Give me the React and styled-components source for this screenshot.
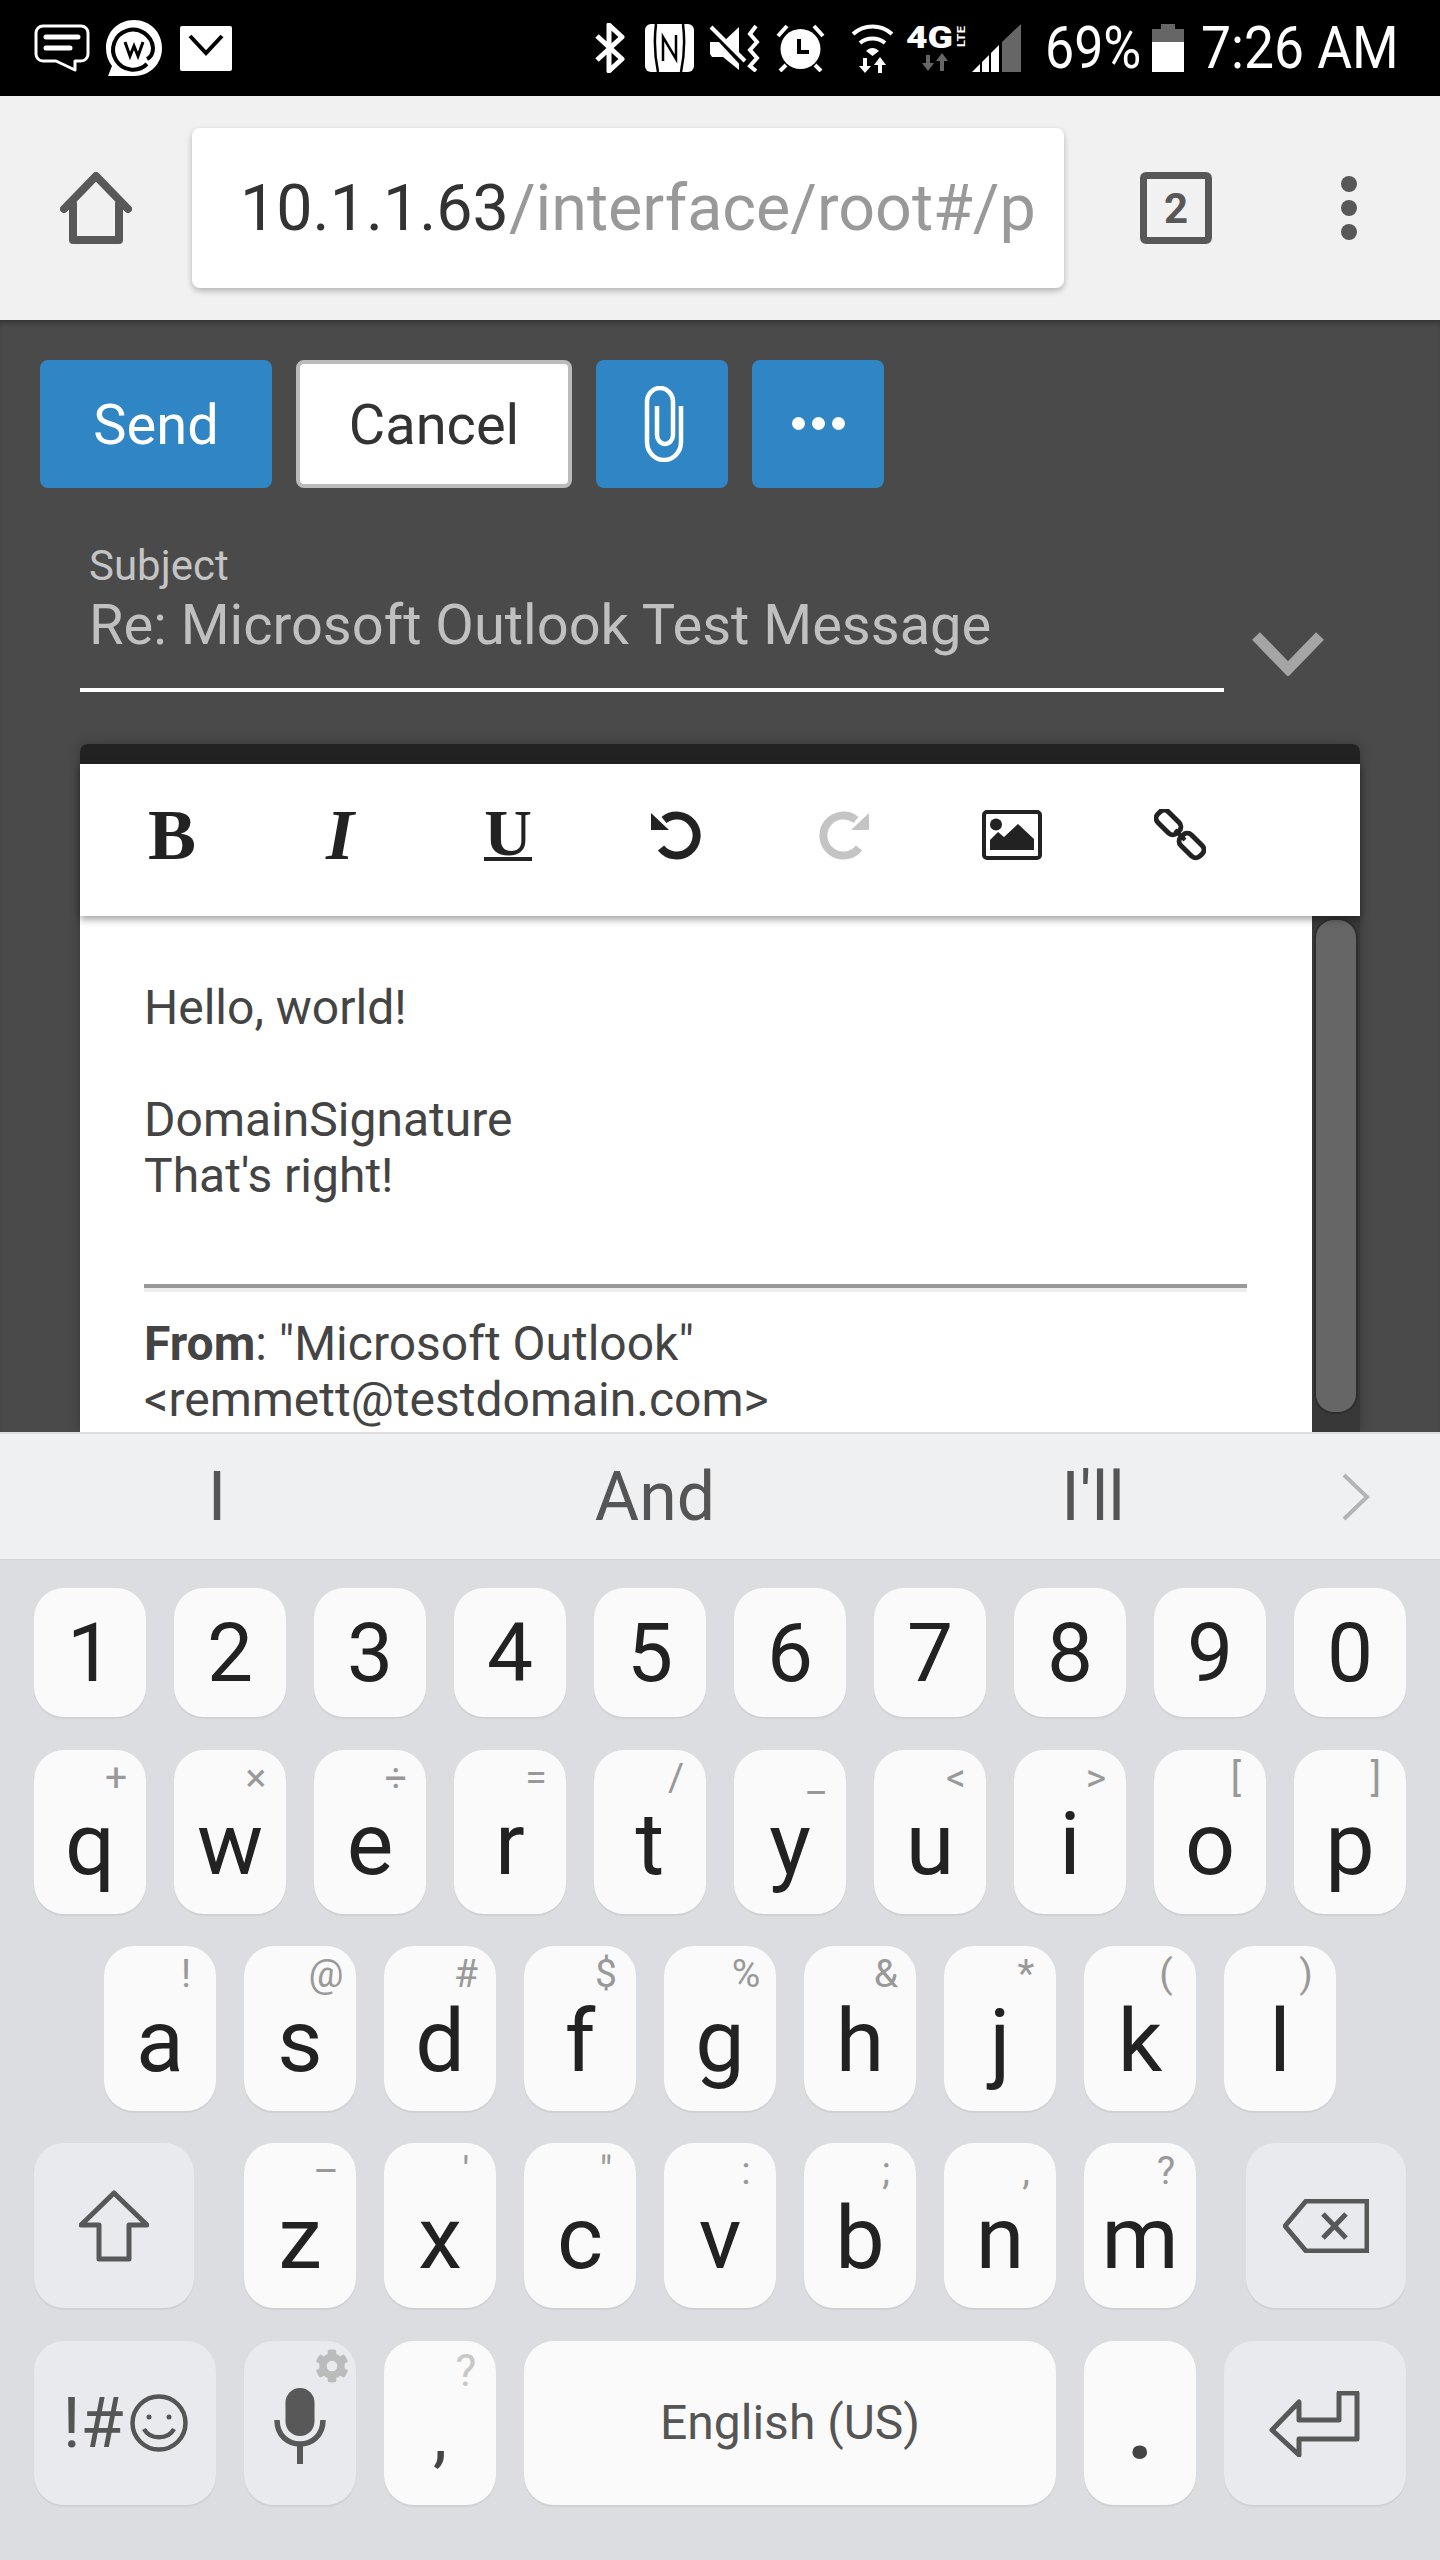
import React from 'react';
import styled, { createGlobalStyle } from 'styled-components';
import { FaCog } from 'react-icons/fa';

const GlobalStyle = createGlobalStyle`
  html, body {
    margin: 0;
    padding: 0;
    background: #000;
  }
  * {
    box-sizing: border-box;
  }
`;

const Screen = styled.div`
  width: 1440px;
  height: 2560px;
  overflow: hidden;
  display: flex;
  flex-direction: column;
  font-family: Roboto, "Liberation Sans", sans-serif;
`;

/* status bar */
const StatusBar = styled.div`
  height: 96px;
  flex: none;
  background: #000;
  display: flex;
  align-items: center;
  padding: 0 45px 0 34px;
`;

const StatusIcon = styled.svg`
  display: block;
  flex: none;
  margin-left: ${p => p.$gap || 0}px;
`;

const StatusSpacer = styled.div`
  flex: 1;
`;

const StatusText = styled.span`
  display: block;
  flex: none;
  width: ${p => p.$w}px;
  margin-left: ${p => p.$gap}px;
  color: #fff;
  font-size: 59px;
  line-height: 64px;
  white-space: nowrap;
  transform: scaleX(${p => p.$sx});
  transform-origin: left center;
`;

/* browser toolbar */
const BrowserBar = styled.div`
  height: 224px;
  flex: none;
  background: #f1f1f1;
  display: flex;
  align-items: center;
  padding-left: 60px;
`;

const UrlBox = styled.div`
  width: 872px;
  height: 160px;
  margin-left: 60px;
  padding: 0 30px 0 48px;
  background: #fff;
  border-radius: 8px;
  box-shadow: 0 3px 6px rgba(0, 0, 0, 0.25);
  display: flex;
  align-items: center;
  overflow: hidden;
  white-space: nowrap;
  font-size: 64.6px;
  color: #999;
`;

const UrlHost = styled.span`
  color: #333;
`;

const TabCount = styled.div`
  width: 72px;
  height: 72px;
  margin-left: 76px;
  border: 7px solid #585858;
  border-radius: 6px;
  display: flex;
  align-items: center;
  justify-content: center;
  color: #585858;
  font-size: 42px;
  font-weight: 700;
`;

const MenuDots = styled.div`
  margin-left: 129px;
  display: flex;
  flex-direction: column;
  gap: 8px;
`;

const MenuDot = styled.span`
  width: 16px;
  height: 16px;
  border-radius: 50%;
  background: #585858;
`;

/* compose page */
const Page = styled.div`
  height: 1112px;
  flex: none;
  background: #4a4a4a;
  box-shadow: inset 0 6px 6px -4px rgba(0, 0, 0, 0.35);
  overflow: hidden;
  padding-top: 40px;
`;

const ButtonRow = styled.div`
  display: flex;
  gap: 24px;
  padding-left: 40px;
`;

const ActionButton = styled.div`
  width: ${p => p.$w}px;
  height: 128px;
  border-radius: 8px;
  padding-top: 2px;
  display: flex;
  align-items: center;
  justify-content: center;
  gap: 7px;
  font-size: 56px;
  color: ${p => (p.$plain ? '#333' : '#fff')};
  background: ${p => (p.$plain ? '#fff' : '#3086c4')};
  border: ${p => (p.$plain ? '4px solid #bbb' : 'none')};
`;

const MoreDot = styled.span`
  width: 13px;
  height: 13px;
  border-radius: 50%;
  background: #fff;
  margin-top: -4px;
`;

const Paperclip = styled.svg`
  display: block;
  margin: -2px 0 0 4px;
`;

const FieldRow = styled.div`
  display: flex;
  align-items: flex-end;
  margin: 53px 0 0 80px;
`;

const SubjectField = styled.div`
  width: 1144px;
  padding: 0 0 31px 9px;
  border-bottom: 4px solid #fff;
`;

const SubjectLabel = styled.div`
  font-size: 42px;
  line-height: 48px;
  padding-top: 1px;
  margin-bottom: -1px;
  color: #c4c4c4;
`;

const SubjectValue = styled.div`
  font-size: 56px;
  line-height: 64px;
  margin-top: 4px;
  color: #c0c0c0;
`;

const Chevron = styled.svg`
  display: block;
  margin: 0 0 16px 28px;
`;

const Editor = styled.div`
  width: 1280px;
  height: 688px;
  margin: 52px 0 0 80px;
  border-top: 20px solid #222;
  border-radius: 8px 8px 0 0;
  box-shadow: 0 0 12px rgba(0, 0, 0, 0.25);
  display: flex;
  flex-direction: column;
`;

const EditorTools = styled.div`
  height: 152px;
  flex: none;
  padding: 0 0 10px 8px;
  background: #fff;
  display: flex;
  align-items: center;
  box-shadow: 0 3px 8px rgba(0, 0, 0, 0.4);
  position: relative;
`;

const ToolSlot = styled.div`
  width: 168px;
  display: flex;
  align-items: center;
  justify-content: center;
  height: 60px;
  color: #222;
`;

const ToolLetter = styled.span`
  font-family: "Liberation Serif", serif;
  font-size: 72px;
  line-height: 60px;
  font-weight: 700;
  font-style: ${p => (p.$italic ? 'italic' : 'normal')};
`;

const UnderlinedLetter = styled.span`
  font-family: "Liberation Serif", serif;
  font-size: 66px;
  line-height: 48px;
  font-weight: 700;
  border-bottom: 4px solid #222;
`;

const ToolIcon = styled.svg`
  display: block;
  transform: ${p => (p.$flip ? 'scaleX(-1)' : 'none')};
`;

const EditorBody = styled.div`
  flex: 1;
  min-height: 0;
  display: flex;
`;

const Message = styled.div`
  flex: 1;
  background: #fff;
  padding: 64px 65px 0 64px;
  font-size: 48px;
  line-height: 56px;
  color: #444;
  overflow: hidden;
`;

const MessageLine = styled.div`
  min-height: 56px;
  white-space: nowrap;
`;

const Quote = styled.div`
  height: 8px;
  margin: 80px 0 24px;
  border-top: 4px solid #999;
  background: #eee;
`;

const ScrollTrack = styled.div`
  width: 48px;
  flex: none;
  background: #383838;
  padding: 4px;
`;

const ScrollThumb = styled.div`
  height: 492px;
  background: #666;
  border-radius: 18px;
  box-shadow: 0 0 0 2px #2e2e2e;
`;

/* keyboard */
const SuggestBar = styled.div`
  height: 128px;
  flex: none;
  background: #eff0f2;
  border-top: 2px solid #dddddf;
  border-bottom: 1px solid #d5d6d8;
  display: flex;
  align-items: center;
`;

const Suggestion = styled.div`
  width: 438px;
  flex: none;
  text-align: center;
  font-size: 68px;
  color: #555;
  margin-left: ${p => (p.$first ? '-2px' : 0)};
`;

const SuggestMore = styled.svg`
  display: block;
  margin-left: 30px;
`;

const Keyboard = styled.div`
  flex: 1;
  background: #dcdde1;
`;

const KeyRow = styled.div`
  display: flex;
  gap: 28px;
  margin-top: ${p => p.$top}px;
  padding-left: ${p => p.$indent || 34}px;
`;

const Key = styled.div`
  position: relative;
  flex: none;
  width: ${p => p.$w || 112}px;
  height: ${p => p.$h}px;
  margin-left: ${p => p.$gap || 0}px;
  border-radius: 30px;
  background: ${p => (p.$fn ? '#e9eaee' : '#fafafa')};
  box-shadow: 0 2px 1px #cfd0d4;
  display: flex;
  align-items: center;
  justify-content: center;
  color: #222;
  font-size: 88px;
  line-height: 100px;
  padding-top: 24px;
`;

const NumberKey = styled(Key)`
  font-size: 82px;
  padding-top: 0;
`;

const PunctKey = styled(Key)`
  font-size: 72px;
  padding-top: 23px;
  color: #444;
`;

const PeriodKey = styled(Key)`
  font-size: 92px;
  font-weight: 700;
  padding-top: 9px;
  color: #444;
`;

const SpaceKey = styled(Key)`
  font-size: 48px;
  padding-top: 0;
  color: #555;
`;

const SymbolKey = styled(Key)`
  font-size: 70px;
  padding-top: 0;
  gap: 6px;
  color: #555;
`;

const KeyGlyph = styled.svg`
  display: block;
  margin-top: ${p => p.$shift}px;
`;

const Hint = styled.span`
  position: absolute;
  top: 10px;
  right: 12px;
  width: 36px;
  text-align: center;
  font-size: 39px;
  line-height: 36px;
  color: #999;
`;

const BigHint = styled(Hint)`
  top: 12px;
  font-size: 44px;
  color: #c8c8c8;
`;

const GearSpot = styled.span`
  position: absolute;
  top: 8px;
  right: 7px;
  display: flex;
  color: #bbb;
`;

const NUMBERS = ['1', '2', '3', '4', '5', '6', '7', '8', '9', '0'];
const TOP_ROW = [['q', '+'], ['w', '×'], ['e', '÷'], ['r', '='], ['t', '/'], ['y', '_'], ['u', '<'], ['i', '>'], ['o', '['], ['p', ']']];
const HOME_ROW = [['a', '!'], ['s', '@'], ['d', '#'], ['f', '$'], ['g', '%'], ['h', '&'], ['j', '*'], ['k', '('], ['l', ')']];
const BOTTOM_ROW = [['x', "'"], ['c', '"'], ['v', ':'], ['b', ';'], ['n', ','], ['m', '?']];

const ICON_GREY = '#585858';

const App = () => (
  <Screen>
    <GlobalStyle />
    <StatusBar>
      {/* chat */}
      <StatusIcon width="56" height="48" viewBox="0 0 56 48" fill="none" stroke="#fff">
        <path d="M9 2H47a7 7 0 0 1 7 7V30a7 7 0 0 1-7 7H41V46L22 37H9a7 7 0 0 1-7-7V9a7 7 0 0 1 7-7Z" strokeWidth="3" strokeLinejoin="round" />
        <path d="M12 13H44M12 24H36" strokeWidth="5" strokeLinecap="round" />
      </StatusIcon>
      {/* workplace */}
      <StatusIcon $gap={16} width="56" height="56" viewBox="0 0 56 56" fill="none">
        <path d="M28 0C44 0 56 12 56 28S44 56 28 56C22 56 12 56 2 56L6 46C2 41 0 35 0 28 0 12 12 0 28 0Z" fill="#fff" />
        <path d="M41 44A20 20 0 1 1 47 28C47 33 45 37 41 39" stroke="#000" strokeWidth="4" />
        <path d="M19 22L24 36 28 26 32 36 37 22" stroke="#000" strokeWidth="3" />
      </StatusIcon>
      {/* mail */}
      <StatusIcon $gap={18} width="52" height="45" viewBox="0 0 52 45" fill="none">
        <rect width="52" height="45" rx="2" fill="#fff" />
        <path d="M10 10L26 27 42 10" stroke="#000" strokeWidth="4" />
      </StatusIcon>
      <StatusSpacer />
      {/* bluetooth */}
      <StatusIcon width="31" height="50" viewBox="0 0 31 50" fill="none">
        <path d="M3 13L28 36 15 48V2L28 14 3 37" stroke="#fff" strokeWidth="5" strokeLinejoin="round" />
      </StatusIcon>
      {/* nfc */}
      <StatusIcon $gap={20} width="49" height="48" viewBox="0 0 49 48" fill="none">
        <rect width="49" height="48" rx="6" fill="#fff" />
        <path d="M11 0Q8 24 13 48M38 0Q41 24 36 48" stroke="#000" strokeWidth="2.5" />
        <path d="M18 37V13L31 35V11" stroke="#000" strokeWidth="2.5" />
      </StatusIcon>
      {/* mute vibrate */}
      <StatusIcon $gap={15} width="51" height="48" viewBox="0 0 51 48" fill="none">
        <path d="M1 18H14L30 3V46L14 33H3L1 30Z" fill="#fff" />
        <path d="M0 2L35 40" stroke="#000" strokeWidth="7" />
        <path d="M2 3L36 37" stroke="#fff" strokeWidth="4" />
        <path d="M47 2L41 10 48 18 41 26 48 34 41 42 47 47" stroke="#fff" strokeWidth="4" />
      </StatusIcon>
      {/* alarm */}
      <StatusIcon $gap={16} width="49" height="48" viewBox="0 0 49 48" fill="none">
        <circle cx="24.5" cy="25" r="20" fill="#fff" />
        <path d="M23 15V28H33" stroke="#000" strokeWidth="4" />
        <path d="M2 12L11 2M47 12L38 2M10 41L4 47M39 41L45 47" stroke="#fff" strokeWidth="4" />
      </StatusIcon>
      {/* wifi */}
      <StatusIcon $gap={26} width="43" height="49" viewBox="0 0 43 49" fill="none">
        <path d="M2 10C13 0 30 0 41 10M9 19C16 13 27 13 34 19" stroke="#fff" strokeWidth="4" />
        <path d="M15 27C19 23 24 23 28 27L21.5 32Z" fill="#fff" />
        <path d="M12 34H16V42H20L14 49 8 42H12ZM27 49H31V41H35L29 33 23 41H27Z" fill="#fff" />
      </StatusIcon>
      {/* 4G LTE */}
      <StatusIcon $gap={12} width="60" height="46" viewBox="0 0 60 46" fill="none">
        <text x="0" y="23" fontFamily="Roboto, sans-serif" fontWeight="900" fontSize="32" fill="#fff" textLength="47" lengthAdjust="spacingAndGlyphs">4G</text>
        <text x="0" y="0" transform="translate(59 22) rotate(-90)" fontFamily="Roboto, sans-serif" fontWeight="700" fontSize="11" fill="#fff" textLength="21" lengthAdjust="spacingAndGlyphs">LTE</text>
        <path d="M20 30H24V38H28L22 46 16 38H20ZM34 46H38V36H42L36 28 30 36H34Z" fill="#666" />
      </StatusIcon>
      {/* signal */}
      <StatusIcon $gap={6} width="50" height="48" viewBox="0 0 50 48">
        <path d="M0 48L8 40V48ZM10 38L17 31V48H10ZM19 29L27 21V48H19Z" fill="#fff" />
        <path d="M30 18L49 0V48H30Z" fill="#666" />
      </StatusIcon>
      <StatusText $gap={23} $w={94} $sx={0.88}>69%</StatusText>
      {/* battery */}
      <StatusIcon $gap={13} width="32" height="48" viewBox="0 0 32 48">
        <path d="M9 0H23V5H32V18H0V5H9Z" fill="#666" />
        <rect y="18" width="32" height="30" fill="#fff" />
      </StatusIcon>
      <StatusText $gap={17} $w={194} $sx={0.905}>7:26 AM</StatusText>
    </StatusBar>

    <BrowserBar>
      {/* home */}
      <svg width="72" height="72" viewBox="0 0 72 72" fill="none" stroke={ICON_GREY} strokeWidth="8" strokeLinejoin="round" strokeLinecap="round">
        <path d="M4 37L36 4 68 37" />
        <path d="M13 32V68H59V32" />
      </svg>
      <UrlBox>
        <UrlHost>10.1.1.63</UrlHost>/interface/root#/p
      </UrlBox>
      <TabCount>2</TabCount>
      <MenuDots>
        <MenuDot />
        <MenuDot />
        <MenuDot />
      </MenuDots>
    </BrowserBar>

    <Page>
      <ButtonRow>
        <ActionButton $w={232}>Send</ActionButton>
        <ActionButton $w={276} $plain>Cancel</ActionButton>
        <ActionButton $w={132}>
          <Paperclip width="40" height="76" viewBox="0 0 40 76" fill="none" stroke="#fff" strokeWidth="4.5">
            <path d="M37 20V56A17 18 0 0 1 3 56V16A13 14 0 0 1 29 16V49A8 9 0 0 1 13 49V20" />
          </Paperclip>
        </ActionButton>
        <ActionButton $w={132}>
          <MoreDot />
          <MoreDot />
          <MoreDot />
        </ActionButton>
      </ButtonRow>

      <FieldRow>
        <SubjectField>
          <SubjectLabel>Subject</SubjectLabel>
          <SubjectValue>Re: Microsoft Outlook Test Message</SubjectValue>
        </SubjectField>
        <Chevron width="72" height="44" viewBox="0 0 72 44" fill="none">
          <path d="M4 4L36 37 68 4" stroke="#a5a5a5" strokeWidth="11" />
        </Chevron>
      </FieldRow>

      <Editor>
        <EditorTools>
          <ToolSlot><ToolLetter>B</ToolLetter></ToolSlot>
          <ToolSlot><ToolLetter $italic>I</ToolLetter></ToolSlot>
          <ToolSlot><UnderlinedLetter>U</UnderlinedLetter></ToolSlot>
          <ToolSlot>
            <ToolIcon width="50" height="50" viewBox="0 0 50 50" fill="none">
              <path d="M13 10A20 20 0 1 1 10 38" stroke="#222" strokeWidth="8" />
              <path d="M0 3V20H18Z" fill="#222" />
            </ToolIcon>
          </ToolSlot>
          <ToolSlot>
            <ToolIcon $flip width="50" height="50" viewBox="0 0 50 50" fill="none">
              <path d="M13 10A20 20 0 1 1 10 38" stroke="#c4c4c4" strokeWidth="8" />
              <path d="M0 3V20H18Z" fill="#c4c4c4" />
            </ToolIcon>
          </ToolSlot>
          <ToolSlot>
            <ToolIcon width="60" height="50" viewBox="0 0 60 50" fill="none">
              <rect x="2" y="2" width="56" height="46" rx="3" stroke="#222" strokeWidth="4" />
              <ellipse cx="14" cy="14.5" rx="6" ry="6" fill="#222" />
              <path d="M8 40V30L16 22 22 27 36 14 52 29V40Z" fill="#222" />
            </ToolIcon>
          </ToolSlot>
          <ToolSlot>
            <ToolIcon width="52" height="52" viewBox="0 0 52 52" fill="none" stroke="#222" strokeWidth="5">
              <rect x="1" y="6" width="27" height="15" rx="6" transform="rotate(45 14.5 13.5)" />
              <rect x="24" y="29" width="27" height="15" rx="6" transform="rotate(45 37.5 36.5)" />
              <path d="M21 21L31 31" strokeWidth="4" />
            </ToolIcon>
          </ToolSlot>
        </EditorTools>
        <EditorBody>
          <Message>
            <MessageLine>Hello, world!</MessageLine>
            <MessageLine />
            <MessageLine>DomainSignature</MessageLine>
            <MessageLine>That's right!</MessageLine>
            <Quote />
            <MessageLine><b>From</b>: "Microsoft Outlook"</MessageLine>
            <MessageLine>&lt;remmett@testdomain.com&gt;</MessageLine>
          </Message>
          <ScrollTrack>
            <ScrollThumb />
          </ScrollTrack>
        </EditorBody>
      </Editor>
    </Page>

    <SuggestBar>
      <Suggestion $first>I</Suggestion>
      <Suggestion>And</Suggestion>
      <Suggestion>I'll</Suggestion>
      <SuggestMore width="28" height="48" viewBox="0 0 28 48" fill="none">
        <path d="M2 2L25 24 2 46" stroke="#b4b4b4" strokeWidth="4" />
      </SuggestMore>
    </SuggestBar>

    <Keyboard>
      <KeyRow $top={28}>
        {NUMBERS.map(n => <NumberKey key={n} $h={129}>{n}</NumberKey>)}
      </KeyRow>
      <KeyRow $top={33}>
        {TOP_ROW.map(([l, h]) => <Key key={l} $h={164}>{l}<Hint>{h}</Hint></Key>)}
      </KeyRow>
      <KeyRow $top={32} $indent={104}>
        {HOME_ROW.map(([l, h]) => <Key key={l} $h={165}>{l}<Hint>{h}</Hint></Key>)}
      </KeyRow>
      <KeyRow $top={32}>
        <Key $fn $w={160} $h={165}>
          <KeyGlyph $shift={-24} width="70" height="72" viewBox="0 0 70 72" fill="none">
            <path d="M35 3L68 35H50V69H20V35H2Z" stroke={ICON_GREY} strokeWidth="5" strokeLinejoin="round" />
          </KeyGlyph>
        </Key>
        <Key $gap={22} $h={165}>z<Hint>–</Hint></Key>
        {BOTTOM_ROW.map(([l, h]) => <Key key={l} $h={165}>{l}<Hint>{h}</Hint></Key>)}
        <Key $fn $gap={22} $w={160} $h={165}>
          <KeyGlyph $shift={-24} width="86" height="54" viewBox="0 0 86 54" fill="none">
            <path d="M2 27L23 2H84V52H23Z" stroke={ICON_GREY} strokeWidth="5" strokeLinejoin="round" />
            <path d="M40 15L63 39M63 15L40 39" stroke={ICON_GREY} strokeWidth="5" />
          </KeyGlyph>
        </Key>
      </KeyRow>
      <KeyRow $top={33}>
        <SymbolKey $fn $w={182} $h={164}>
          <span>!#</span>
          <svg width="58" height="58" viewBox="0 0 58 58" fill="none" stroke="#555" strokeWidth="4.5">
            <circle cx="29" cy="29" r="26.5" />
            <path d="M14 35C20 46 38 46 44 35" />
            <circle cx="19" cy="23" r="2.5" fill="#555" stroke="none" />
            <circle cx="39" cy="23" r="2.5" fill="#555" stroke="none" />
          </svg>
        </SymbolKey>
        <Key $fn $h={164}>
          <GearSpot><FaCog size={34} /></GearSpot>
          <KeyGlyph $shift={-18} width="52" height="76" viewBox="0 0 52 76" fill="none">
            <rect x="11.5" y="0" width="29" height="48" rx="14.5" fill="#585858" />
            <path d="M3 32C3 64 49 64 49 32" stroke="#585858" strokeWidth="5.5" />
            <path d="M26 58V76" stroke="#585858" strokeWidth="6" />
          </KeyGlyph>
        </Key>
        <PunctKey $h={164}>,<BigHint>?</BigHint></PunctKey>
        <SpaceKey $w={532} $h={164}>English (US)</SpaceKey>
        <PeriodKey $h={164}>.</PeriodKey>
        <Key $fn $w={182} $h={164}>
          <KeyGlyph $shift={-22} width="92" height="66" viewBox="0 0 92 66" fill="none">
            <path d="M3 39L30 11V29H70V2H88V48H30V64Z" stroke={ICON_GREY} strokeWidth="5" strokeLinejoin="round" />
          </KeyGlyph>
        </Key>
      </KeyRow>
    </Keyboard>
  </Screen>
);

export default App;
